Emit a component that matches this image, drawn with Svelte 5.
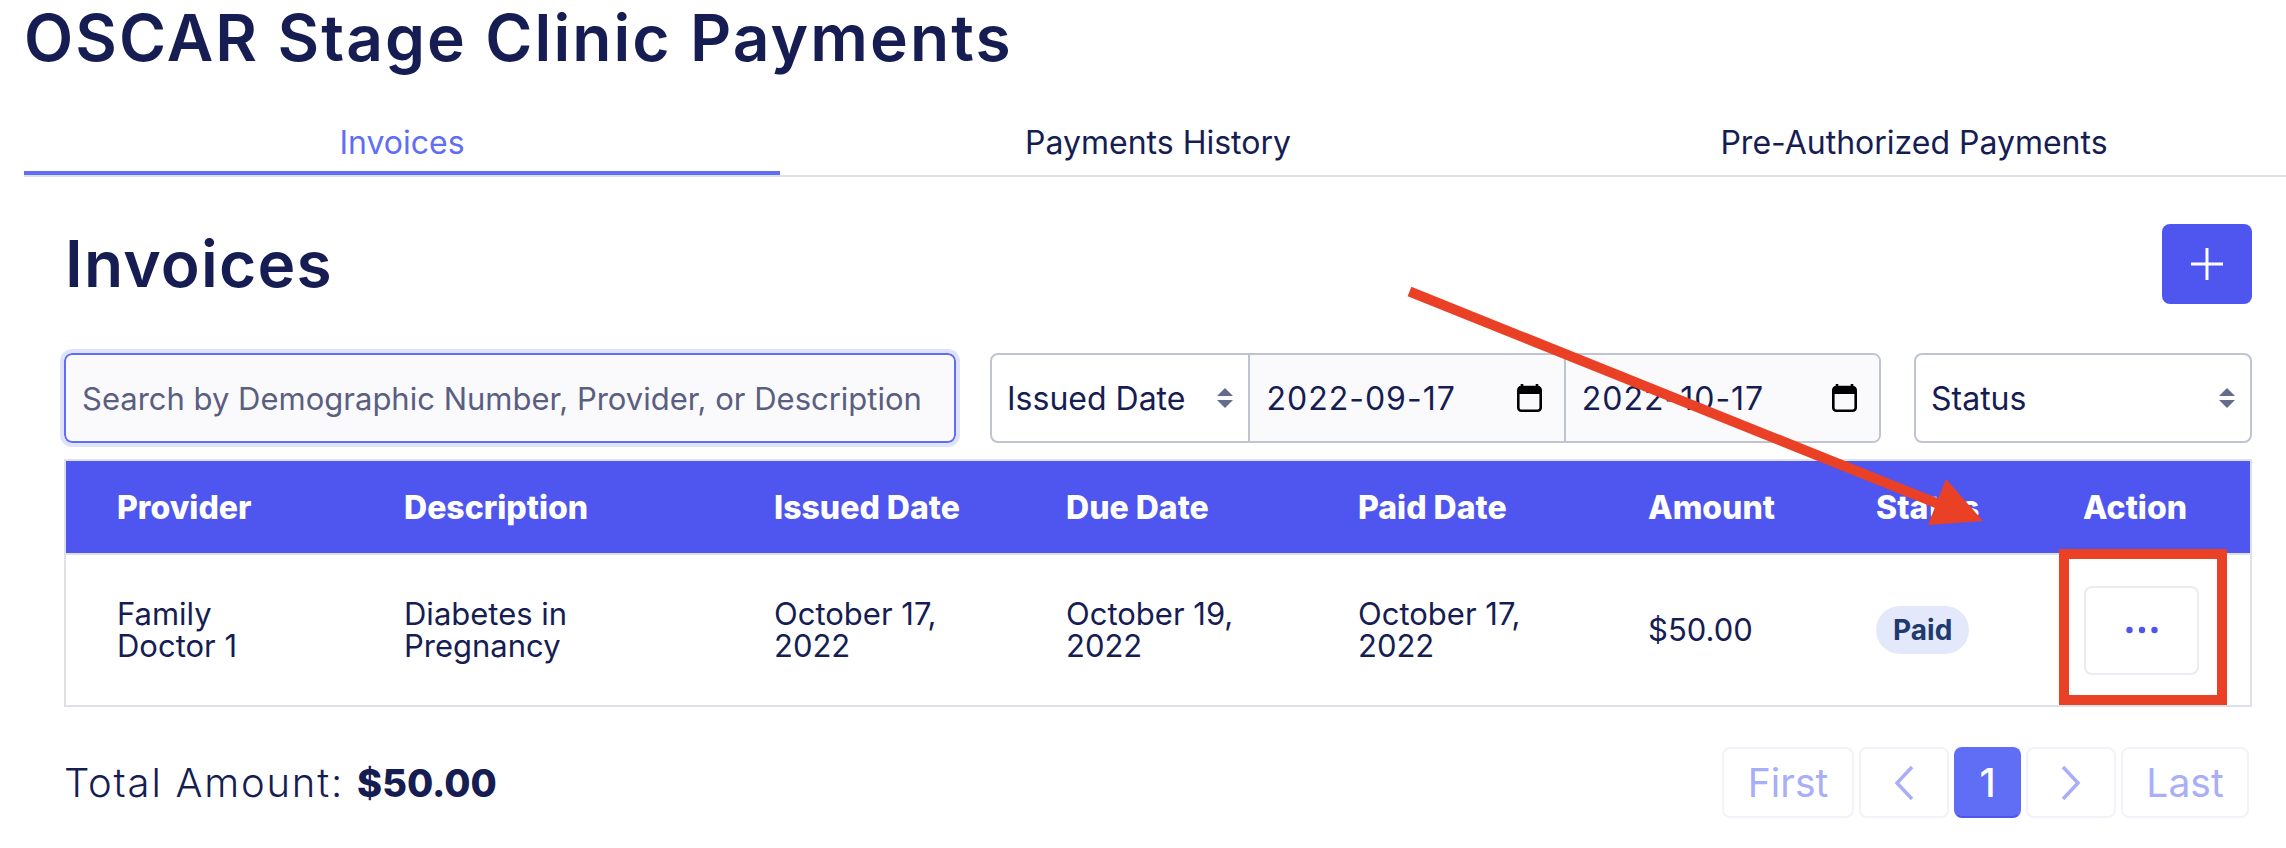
<script>
  const tabs = ['Invoices', 'Payments History', 'Pre-Authorized Payments'];
  const columns = [
    { label: 'Provider', value: 'Family Doctor 1', width: 286 },
    { label: 'Description', value: 'Diabetes in Pregnancy', width: 370 },
    { label: 'Issued Date', value: 'October 17, 2022', width: 292 },
    { label: 'Due Date', value: 'October 19, 2022', width: 292 },
    { label: 'Paid Date', value: 'October 17, 2022', width: 290 },
    { label: 'Amount', value: '$50.00', width: 228 },
    { label: 'Status', width: 207 },
    { label: 'Action' }
  ];
  const dates = ['2022-09-17', '2022-10-17'];
</script>

{#snippet updown()}
  <svg class="updown" width="16" height="24" viewBox="0 0 16 24">
    <path d="M8 2 L16 10 H0 Z M8 22 L0 14 H16 Z" fill="#666d8c" />
  </svg>
{/snippet}

{#snippet calendar()}
  <svg class="calendar" width="25" height="28" viewBox="0 0 25 28">
    <path d="M5 0 V4 M20 0 V4" stroke="#000" stroke-width="2.6" />
    <rect x="1.3" y="3" width="22.4" height="23.7" rx="3" fill="none" stroke="#000" stroke-width="2.6" />
    <rect x="1.3" y="3" width="22.4" height="7" fill="#000" />
  </svg>
{/snippet}

<div class="page">
  <h1>OSCAR Stage Clinic Payments</h1>

  <nav class="tabs">
    {#each tabs as tab, i}
      <div class="tab" class:active={i === 0}>{tab}</div>
    {/each}
  </nav>

  <main class="content">
    <div class="head">
      <h2>Invoices</h2>
      <button class="add" aria-label="Add">
        <svg width="34" height="34" viewBox="0 0 34 34">
          <path d="M17 1 V33 M1 17 H33" stroke="#fff" stroke-width="3" />
        </svg>
      </button>
    </div>

    <div class="filters">
      <input class="search" placeholder="Search by Demographic Number, Provider, or Description" />
      <div class="group">
        <div class="field select">Issued Date {@render updown()}</div>
        {#each dates as date}
          <div class="field date">{date} {@render calendar()}</div>
        {/each}
      </div>
      <div class="field status">Status {@render updown()}</div>
    </div>

    <table>
      <colgroup>
        {#each columns as col}
          <col style:width={col.width ? col.width + 'px' : null} />
        {/each}
      </colgroup>
      <thead>
        <tr>
          {#each columns as col}
            <th>{col.label}</th>
          {/each}
        </tr>
      </thead>
      <tbody>
        <tr>
          {#each columns as col}
            <td>
              {#if col.label === 'Status'}
                <span class="badge">Paid</span>
              {:else if col.label === 'Action'}
                <button class="more" aria-label="More">
                  <svg width="32" height="8" viewBox="0 0 32 8">
                    <circle cx="3.5" cy="4" r="3.2" />
                    <circle cx="16" cy="4" r="3.2" />
                    <circle cx="28.5" cy="4" r="3.2" />
                  </svg>
                </button>
              {:else}
                {col.value}
              {/if}
            </td>
          {/each}
        </tr>
      </tbody>
    </table>

    <div class="foot">
      <div class="total">Total Amount: <b>$50.00</b></div>
      <div class="pager">
        <span class="pg first">First</span>
        <span class="pg arrow">
          <svg width="24" height="36" viewBox="0 0 24 36"><path d="M20 2 L5 18 L20 34" /></svg>
        </span>
        <span class="pg current">1</span>
        <span class="pg arrow">
          <svg width="24" height="36" viewBox="0 0 24 36"><path d="M4 2 L19 18 L4 34" /></svg>
        </span>
        <span class="pg last">Last</span>
      </div>
    </div>
  </main>

  <!-- annotation drawn on top of the screenshot -->
  <svg class="markup" width="2286" height="848" viewBox="0 0 2286 848">
    <path d="M1409.5 291.5 L1955 510.6" stroke="#ea4025" stroke-width="10" />
    <polygon points="1946,479 1983,521 1928,525" fill="#ea4025" />
    <rect x="2064" y="554" width="158" height="146" fill="none" stroke="#ea4025" stroke-width="10" />
  </svg>
</div>

<style>
  :global(body) {
    background: #fff;
    color: #161d52;
    font-family: Inter, "Noto Sans", sans-serif;
  }
  .page {
    position: relative;
    width: 2286px;
    height: 848px;
    overflow: hidden;
  }
  h1, h2 {
    margin: 0;
    font-family: Inter, sans-serif;
    font-weight: 600;
    font-size: 64px;
    line-height: 76px;
  }
  h1 { padding-left: 24px; letter-spacing: 2.1px; }
  h2 { letter-spacing: 1.2px; margin-left: 1px; }

  .tabs {
    display: grid;
    grid-template-columns: repeat(3, 1fr);
    margin: 44px -6px 0 24px;
    height: 55px;
    border-bottom: 2px solid #dde0e6;
  }
  .tab {
    font-size: 32px;
    line-height: 46px;
    text-align: center;
  }
  .tab.active {
    box-sizing: border-box;
    color: #5f6ef5;
    border-bottom: 4px solid #5f6ef5;
    height: 55px;
  }

  .content { padding: 47px 34px 0 64px; }
  .head {
    display: flex;
    justify-content: space-between;
    align-items: center;
    height: 80px;
    margin-bottom: 49px;
  }
  .add {
    display: flex;
    align-items: center;
    justify-content: center;
    width: 90px;
    height: 80px;
    padding: 0;
    border: none;
    border-radius: 8px;
    background: #4f56ef;
  }

  .filters {
    display: flex;
    height: 90px;
    margin-bottom: 16px;
  }
  .search {
    box-sizing: border-box;
    width: 892px;
    height: 90px;
    padding: 0 16px;
    border: 2px solid #5f6ef5;
    border-radius: 8px;
    outline: 4px solid #dfe3fb;
    background: #fafafd;
    color: #161d52;
    font: 31px Inter, sans-serif;
  }
  .search::placeholder { color: #5a5f80; opacity: 1; }
  .group {
    display: flex;
    margin-left: 34px;
    border: 2px solid #c0c4d0;
    border-radius: 8px;
    box-sizing: border-box;
    width: 891px;
  }
  .field {
    display: flex;
    align-items: center;
    justify-content: space-between;
    box-sizing: border-box;
    padding: 0 15px;
    font-size: 32px;
  }
  .select { width: 257px; }
  .date {
    width: 316px;
    padding: 0 22px 0 16px;
    background: #fafafd;
    border-left: 2px solid #c0c4d0;
    letter-spacing: 1px;
  }
  .date:last-child { border-radius: 0 6px 6px 0; }
  .status {
    width: 338px;
    margin-left: 33px;
    border: 2px solid #c0c4d0;
    border-radius: 8px;
  }
  .updown { flex: none; }

  table {
    box-sizing: border-box;
    width: 2188px;
    height: 248px;
    border-collapse: separate;
    border-spacing: 0;
    table-layout: fixed;
    border: 2px solid #dfe1e8;
  }
  th {
    height: 92px;
    padding: 0 0 0 52px;
    background: #4f56ef;
    border-bottom: 2px solid #dfe1e8;
    color: #fff;
    font-size: 32px;
    font-weight: 800;
    text-align: left;
    white-space: nowrap;
  }
  td {
    padding: 0 52px;
    font-size: 31px;
    line-height: 32px;
  }
  th:first-child, td:first-child { padding-left: 51px; }
  td:nth-child(n+7) { padding-right: 0; }
  .badge {
    display: inline-block;
    padding: 0 17px;
    height: 48px;
    border-radius: 24px;
    background: #e3e8fb;
    color: #1e3a6e;
    font-size: 28px;
    font-weight: 700;
    line-height: 48px;
  }
  .more {
    display: flex;
    align-items: center;
    justify-content: center;
    box-sizing: border-box;
    width: 115px;
    height: 89px;
    margin-left: 1px;
    padding: 0;
    background: #fff;
    border: 2px solid #eaebf3;
    border-radius: 8px;
  }
  .more circle { fill: #4f56ef; }

  .foot {
    display: flex;
    justify-content: space-between;
    align-items: center;
    margin-top: 40px;
    height: 71px;
  }
  .total { font-size: 40px; font-weight: 300; letter-spacing: 1.8px; }
  .total b { font-size: 38px; font-weight: 800; letter-spacing: 0; }
  .pager { display: flex; gap: 5px; padding-right: 3px; }
  .pg {
    display: flex;
    align-items: center;
    justify-content: center;
    box-sizing: border-box;
    height: 71px;
    border: 2px solid #f2f3f9;
    border-radius: 8px;
    color: #a9aef8;
    font-size: 39px;
  }
  .first { width: 132px; }
  .last { width: 128px; }
  .arrow { width: 90px; }
  .arrow path { fill: none; stroke: #a9aef8; stroke-width: 3.5; }
  .current {
    width: 67px;
    background: #5f6ef5;
    border-color: #5f6ef5;
    border-bottom-color: #4f56ef;
    color: #fff;
    font-weight: 500;
  }

  .markup {
    position: absolute;
    top: 0;
    left: 0;
    pointer-events: none;
  }
</style>
